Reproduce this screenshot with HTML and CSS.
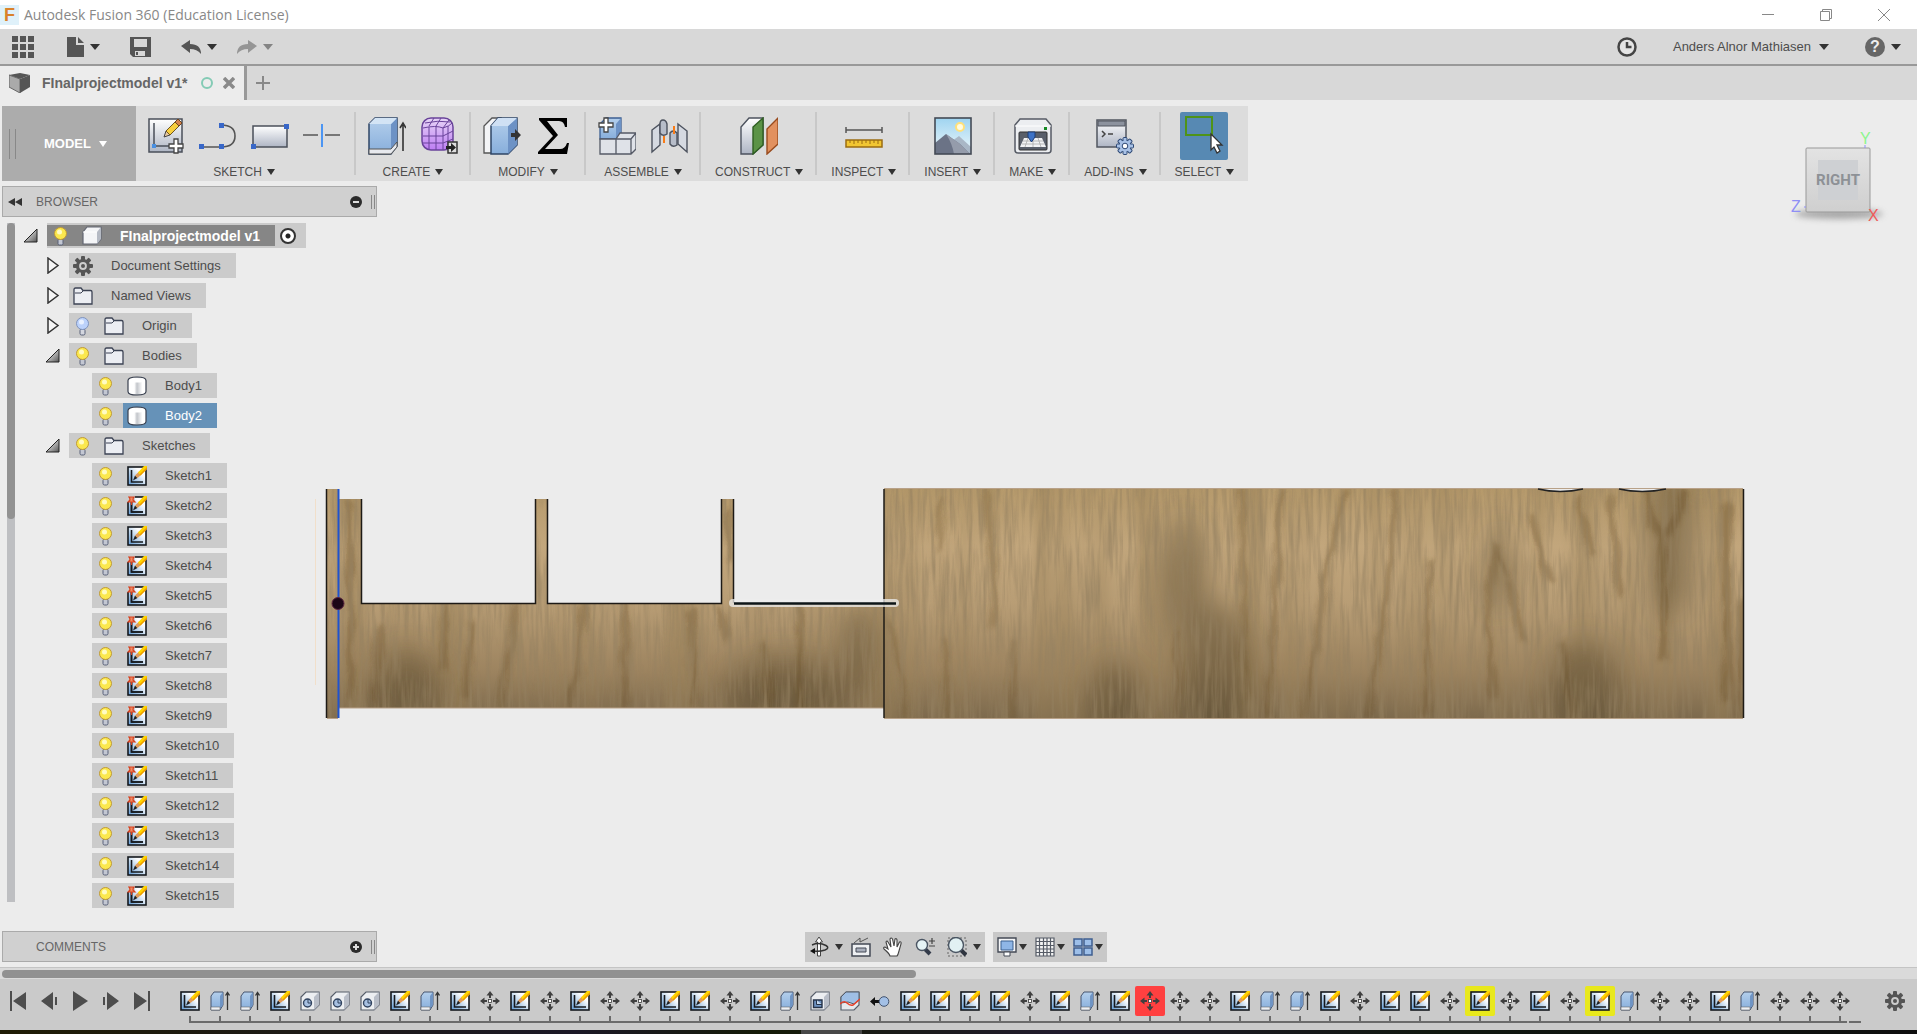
FILE: index.html
```html
<!DOCTYPE html>
<html lang="en">
<head>
    <meta charset="UTF-8">
    <meta name="viewport" content="width=device-width, initial-scale=1.0">
    <title>Autodesk Fusion 360 (Education License)</title>
    <link rel="stylesheet" href="styles.css">
</head>
<body>
    <!-- icon sprite -->
    <svg class="sprite" aria-hidden="true">
        <defs>
            <linearGradient id="g-paper" x1="0" y1="0" x2="0" y2="1"><stop offset="0" stop-color="#fff"/><stop offset="1" stop-color="#aeb5c4"/></linearGradient>
            <linearGradient id="g-sky" x1="0" y1="0" x2="0" y2="1"><stop offset="0" stop-color="#9fd4f0"/><stop offset="1" stop-color="#eef8fb"/></linearGradient>
            <linearGradient id="g-sk" x1="1" y1="0" x2="0" y2="1"><stop offset="0.3" stop-color="#fdfdfd"/><stop offset="1" stop-color="#5d9ad6"/></linearGradient>
            <linearGradient id="g-tri" x1="0" y1="0" x2="1" y2="1"><stop offset="0.2" stop-color="#eee"/><stop offset="1" stop-color="#555"/></linearGradient>
            <linearGradient id="g-cyl" x1="0" y1="0" x2="1" y2="0"><stop offset="0" stop-color="#fff"/><stop offset="0.35" stop-color="#fff"/><stop offset="0.5" stop-color="#c2c5ca"/><stop offset="0.8" stop-color="#fff"/></linearGradient>
            <linearGradient id="g-blue" x1="0" y1="0" x2="0" y2="1"><stop offset="0" stop-color="#b4cfec"/><stop offset="1" stop-color="#87aedb"/></linearGradient>
            <linearGradient id="g-purple" x1="0" y1="0" x2="0" y2="1"><stop offset="0" stop-color="#e7d5f7"/><stop offset="1" stop-color="#bd7df3"/></linearGradient>
        </defs>

        <symbol id="gear" viewBox="0 0 20 20">
            <g fill="#555"><rect x="8" width="4" height="20" rx="1"/><rect x="8" width="4" height="20" rx="1" transform="rotate(45 10 10)"/><rect x="8" width="4" height="20" rx="1" transform="rotate(90 10 10)"/><rect x="8" width="4" height="20" rx="1" transform="rotate(135 10 10)"/></g>
            <circle cx="10" cy="10" r="5.5" fill="#ccc" stroke="#555" stroke-width="3.2"/><circle cx="10" cy="10" r="2" fill="#555"/>
        </symbol>
        <symbol id="bulb" viewBox="0 0 20 20">
            <rect x="7" y="13" width="5" height="6" rx="1.5" fill="#c3c7d2" stroke="#596078"/>
            <circle cx="9.500" cy="7.500" r="6" fill="#fbe84e" stroke="#c09a36"/><circle cx="8.500" cy="6" r="2.500" fill="#fffbc4"/>
        </symbol>
        <symbol id="bulb-off" viewBox="0 0 20 20">
            <rect x="7" y="13" width="5" height="6" rx="1.5" fill="#d4d7df" stroke="#596078"/>
            <circle cx="9.500" cy="7.500" r="6" fill="#bcd2fb" stroke="#7f93bd"/><circle cx="8.500" cy="6" r="2.500" fill="#e9f1ff"/>
        </symbol>
        <symbol id="folder" viewBox="0 0 20 20">
            <path d="M1 18V3.500Q1 2 2.500 2H8L10 4.500H17.500Q19 4.500 19 6V18Z" fill="#eceef3" stroke="#3c4354" stroke-width="1.300"/><path d="M2 7H8L10 5" fill="none" stroke="#3c4354"/>
        </symbol>
        <symbol id="cube" viewBox="0 0 20 20">
            <path d="M1 18V6L5 1H19V13L15 18Z" fill="#f4f5f7" stroke="#626672" stroke-width="1.200"/><path d="M15 18V6L19 1V13Z" fill="#b5bac4"/><path d="M1 6H15" stroke="#fff"/>
        </symbol>
        <symbol id="body" viewBox="0 0 20 20">
            <path d="M1 4.500Q1 1 10 1T19 4.500V15.500Q19 19 10 19T1 15.500Z" fill="url(#g-cyl)" stroke="#39404f" stroke-width="1.200"/><path d="M2 4.500Q3 6.500 10 6.500T18 4.500Q16 2 10 2T2 4.500Z" fill="#fff"/>
        </symbol>
        <symbol id="sketch" viewBox="0 0 20 20">
            <rect x="1" y="1" width="18" height="18" fill="url(#g-sk)" stroke="#15181d" stroke-width="1.600"/>
            <path d="M4.500 4V16H16" fill="none" stroke="#15181d" stroke-width="1.600"/>
            <path d="M6 14.500L8 9.500L10.500 12Z" fill="#222"/><path d="M8 9.500L12 5.500L14.500 8.500L10.500 12Z" fill="#e09a58"/><path d="M11 6.500L17 0H20V3L13.500 9.500Z" fill="#ffd400"/><path d="M12.500 8.500L20 1V3L13.500 9.500Z" fill="#ee9a00"/>
        </symbol>
        <symbol id="sketch-pin" viewBox="0 0 20 20">
            <use href="#sketch"/><path d="M0 0H8V6H0Z" fill="#ccc"/><path d="M4.500 6V16H16" fill="none" stroke="#15181d" stroke-width="1.600"/>
            <path d="M1 1H8M2.500 1L3 4L1 6H8L6 4L6.500 1M4.500 6V9" fill="#f08a63" stroke="#d6401f" stroke-width="1.200"/>
        </symbol>
        <symbol id="extrude" viewBox="0 0 20 20">
            <path d="M1 18V5L4 1H13V14L10 19H1Z" fill="url(#g-blue)" stroke="#46556f"/><path d="M10 5L13 1V14L10 18Z" fill="#6f94c4"/><path d="M1 16H10V19H1Z" fill="#eef1f5" stroke="#666" stroke-width="0.600"/>
            <path d="M17.500 19V2M15.500 4.500L17.500 1.500L19.500 4.500" fill="none" stroke="#333" stroke-width="1.300"/>
        </symbol>
        <symbol id="hole" viewBox="0 0 20 20">
            <path d="M1 19V6L6 1H19V14L14 19Z" fill="#eceef1" stroke="#555c69" stroke-width="1.200"/><path d="M14 19V6L19 1V14Z" fill="#b9bec8"/><circle cx="7.500" cy="12" r="4" fill="#a7c0e2" stroke="#31435f" stroke-width="1.400"/><path d="M8 8V12H11" fill="none" stroke="#31435f"/>
        </symbol>
        <symbol id="shell" viewBox="0 0 20 20">
            <path d="M1 19V6L6 1H19V14L14 19Z" fill="#eceef1" stroke="#555c69" stroke-width="1.200"/><path d="M14 19V6L19 1V14Z" fill="#b9bec8"/><path d="M3.500 9H12V16.500H3.500Z" fill="#6d92c2" stroke="#25334a" stroke-width="1.400"/><path d="M6.500 9V13.500H12" fill="#c6d8ee" stroke="#25334a"/>
        </symbol>
        <symbol id="split" viewBox="0 0 20 20">
            <path d="M1 19V6L6 1H19V14L14 19Z" fill="#e5e8ed" stroke="#555c69" stroke-width="1.200"/><path d="M1 12V6L6 1H19V9L14 13L8 11Z" fill="#9fbfe5" stroke="#555c69"/><path d="M0 13Q4 9 7 12T13 14L20 8" fill="none" stroke="#e8412b" stroke-width="1.500"/>
        </symbol>
        <symbol id="point" viewBox="0 0 20 20">
            <path d="M0 10.500L5 6V9H9V12H5V15Z" fill="#111"/><circle cx="14" cy="10.500" r="4.800" fill="#a3c0e6" stroke="#42536e"/>
        </symbol>
        <symbol id="move" viewBox="0 0 20 20">
            <g fill="#3f3f3f"><path id="mv" d="M10 0L13.500 4.500H11V7H9V4.500H6.500Z"/><use href="#mv" transform="rotate(90 10 10)"/><use href="#mv" transform="rotate(180 10 10)"/><use href="#mv" transform="rotate(270 10 10)"/></g>
            <rect x="8.500" y="8.500" width="3" height="3" fill="#fff" stroke="#3f3f3f" stroke-width="0.800"/>
        </symbol>
    </svg>

    <header class="titlebar">
        <span class="logo">F</span>
        <h1>Autodesk Fusion 360 (Education License)</h1>
        <div class="window-buttons">
            <button aria-label="Minimize"><svg width="12" height="12"><path d="M0 5.500H12"/></svg></button>
            <button aria-label="Restore"><svg width="12" height="12"><path d="M.5 2.500H9.500V11.500H.5ZM2.500 2.500V.5H11.500V9.500H9.500"/></svg></button>
            <button aria-label="Close"><svg width="12" height="12"><path d="M0 0L12 12M12 0L0 12"/></svg></button>
        </div>
    </header>

    <div class="appbar">
        <button class="apps" aria-label="Data panel"><svg width="22" height="22" fill="#555"><path d="M0 0H6V6H0ZM8 0H14V6H8ZM16 0H22V6H16ZM0 8H6V14H0ZM8 8H14V14H8ZM16 8H22V14H16ZM0 16H6V22H0ZM8 16H14V22H8ZM16 16H22V22H16Z"/></svg></button>
        <button aria-label="File"><svg width="17" height="20" fill="#555"><path d="M0 0H9V8H17V20H0ZM11 0L17 6H11Z"/></svg><i class="caret"></i></button>
        <button aria-label="Save"><svg width="21" height="20"><path d="M0 0H21V20H3L0 17Z" fill="#555"/><path d="M4 2H17V10H4Z" fill="#d8d8d8"/><path d="M5 14H15V19H5Z" fill="#d8d8d8"/><path d="M6 15H8V18H6Z" fill="#555"/></svg></button>
        <div class="history">
            <button aria-label="Undo"><svg width="20" height="14"><path d="M0 6L9 0V4Q20 4 20 14Q16 9 9 9V13Z" fill="#555"/></svg><i class="caret"></i></button>
            <button class="off" aria-label="Redo"><svg width="20" height="14"><path d="M20 6L11 0V4Q0 4 0 14Q4 9 11 9V13Z" fill="#555"/></svg><i class="caret"></i></button>
        </div>
        <div class="account">
            <button aria-label="Job status"><svg width="20" height="20"><circle cx="10" cy="10" r="8.500" fill="#e4e4e4" stroke="#444" stroke-width="2.500"/><path d="M10 5V10H14.500" fill="none" stroke="#444" stroke-width="2.500"/></svg></button>
            <button class="user">Anders Alnor Mathiasen<i class="caret"></i></button>
            <button class="help" aria-label="Help"><span>?</span><i class="caret"></i></button>
        </div>
    </div>

    <nav class="tabs">
        <div class="tab">
            <svg width="22" height="20"><path d="M0 2L11 0L21 2L11 6Z" fill="#555"/><path d="M0 2L11 6V20L0 14Z" fill="#aaa" stroke="#666"/><path d="M11 6L21 2V14L11 20Z" fill="#555"/></svg>
            <a href="#">FInalprojectmodel v1*</a>
            <i class="ring"></i>
            <button aria-label="Close tab"><svg width="12" height="12"><path d="M1 1L11 11M11 1L1 11" stroke="#8a8a8a" stroke-width="3.500"/></svg></button>
        </div>
        <button class="new-tab" aria-label="New tab"><svg width="14" height="14"><path d="M7 0V14M0 7H14" stroke="#888" stroke-width="2"/></svg></button>
    </nav>

    <main class="workspace">
        <svg class="model" viewBox="0 100 1917 867" role="img" aria-label="Model, right view">
            <defs>
                <linearGradient id="wood" gradientUnits="userSpaceOnUse" x1="0" y1="489" x2="0" y2="718">
                    <stop offset="0" stop-color="#b69a6c"/><stop offset="0.25" stop-color="#c2a67c"/><stop offset="0.500" stop-color="#b89d75"/><stop offset="0.8" stop-color="#9c835f"/><stop offset="1" stop-color="#7d6a4d"/>
                </linearGradient>
                <filter id="grain" filterUnits="userSpaceOnUse" x="320" y="480" width="1430" height="245">
                    <feTurbulence type="fractalNoise" baseFrequency="0.22 0.016" numOctaves="3" seed="7"/>
                    <feColorMatrix values="0 0 0 0 0.3  0 0 0 0 0.22  0 0 0 0 0.12  2.6 0 0 0 -1.05"/>
                </filter>
                <filter id="bands" filterUnits="userSpaceOnUse" x="320" y="480" width="1430" height="245">
                    <feTurbulence type="fractalNoise" baseFrequency="0.03 0.002" numOctaves="2" seed="12"/>
                    <feColorMatrix values="0 0 0 0 0.32  0 0 0 0 0.22  0 0 0 0 0.1  2.2 0 0 0 -0.9"/>
                </filter>
                <filter id="soft" filterUnits="userSpaceOnUse" x="320" y="480" width="1430" height="245">
                    <feGaussianBlur stdDeviation="2.5" result="b"/>
                    <feTurbulence type="fractalNoise" baseFrequency="0.08 0.03" numOctaves="2" seed="3"/>
                    <feDisplacementMap in="b" scale="12" xChannelSelector="R" yChannelSelector="G"/>
                </filter>
                <filter id="softer" filterUnits="userSpaceOnUse" x="320" y="480" width="1430" height="245"><feGaussianBlur stdDeviation="14"/></filter>
                <clipPath id="shape"><path d="M327 489H338V499H361V603H536V499H548V603H722V499H733V603H884V489H1743V718H884V708H338V718H327Z"/></clipPath>
            </defs>
            <path d="M315.500 499V685" stroke="#f1dfca"/>
            <g clip-path="url(#shape)">
                <rect x="326" y="488" width="1418" height="231" fill="url(#wood)"/>
                <rect x="326" y="488" width="1418" height="231" filter="url(#bands)" opacity="0.600"/>
                <g fill="#4e3f28" opacity="0.420" filter="url(#softer)">
                    <ellipse cx="1215" cy="680" rx="36" ry="80"/><ellipse cx="1115" cy="700" rx="24" ry="40"/><ellipse cx="407" cy="690" rx="34" ry="40"/><ellipse cx="785" cy="690" rx="60" ry="35"/><ellipse cx="858" cy="650" rx="18" ry="46"/><ellipse cx="1585" cy="690" rx="36" ry="50"/><ellipse cx="1672" cy="540" rx="26" ry="80"/><ellipse cx="1185" cy="580" rx="24" ry="60"/><ellipse cx="1500" cy="570" rx="14" ry="40"/>
                </g>
                <g fill="none" stroke="#684e28" stroke-width="6" opacity="0.400" filter="url(#soft)">
                    <path d="M1345 490Q1338 525 1329 553L1318 630L1301 718M1395 489Q1394 540 1388 587L1368 718M1281 489L1276 587L1267 718M1430 560L1426 718"/>
                    <path d="M1497 543L1489 590V640L1494 700M1506 577L1525 643M1497 545L1508 575M1531 513L1542 560L1553 580M1579 498L1592 557M1610 495L1618 597M1562 640L1574 718"/>
                    <path d="M1646 489Q1649 525 1663 537Q1678 522 1686 489M1663 537V660M1727 503V703M1742 600V718" stroke-width="9"/>
                    <path d="M985 489L995 570L992 630M943 500L938 550M1177 630V718M890 620L908 718M944 640L948 718M1240 489L1246 700M1016 640L1010 718" stroke-width="4"/>
                    <path d="M517 603L513 637L500 708M584 603L579 670L567 708M444 603V670M380 625L375 708M472 620L466 697M626 603L624 708M690 608L695 708M719 607L727 640M763 643L771 705M800 605V708M349 500L351 700M729 510V560"/>
                </g>
                <rect x="326" y="488" width="1418" height="231" filter="url(#grain)" opacity="0.650"/>
            </g>
            <path d="M339 708H884M884 718.500H1743M327 718.500H338M884 488.500H1743" stroke="#b8a188" fill="none"/>
            <path d="M326.500 489V718M361.500 499V603.500H535.500V499M547.500 499V603.500H721.500V499M733.500 499V603M884 489V718M1743.500 489V718" stroke="#1d1a16" stroke-width="1.500" fill="none"/>
            <path d="M1538 489Q1560 494 1583 489M1619 489Q1642 494 1666 489" fill="#ececec" stroke="#222" stroke-width="1.500"/>
            <path d="M338.500 489V718" stroke="#1f52cf" stroke-width="2"/>
            <rect x="729" y="599" width="170" height="8" rx="4" fill="#eee" fill-opacity="0.750"/>
            <path d="M734 603.500H896" stroke="#0d1517" stroke-width="2.500"/>
            <circle cx="338" cy="603.500" r="6" fill="#1c0616" stroke="#5c2540"/>
        </svg>

        <section class="ribbon" aria-label="Tools">
            <button class="mode"><i class="grip"></i><span>MODEL<i class="caret"></i></span></button>
            <div class="group wide">
                <div class="tools">
                    <button aria-label="Create sketch"><svg viewBox="0 0 38 38"><rect x="2" y="2" width="33" height="33" fill="url(#g-paper)" stroke="#4a4f59" stroke-width="1.500"/><path d="M7 6V29H24" fill="none" stroke="#4a4f59" stroke-width="1.500"/><rect x="5" y="27" width="4" height="4" fill="#4a90e2"/><path d="M17 20L19 14L23 18Z" fill="#e8c9a0" stroke="#444"/><path d="M19 14L30 3L34 7L23 18Z" fill="#f8cf3e" stroke="#6d5420"/><path d="M28 5L31 2L35 6L32 9Z" fill="#d6834e" stroke="#6d4420"/><path d="M27 22H31V27H36V31H31V36H27V31H22V27H27Z" fill="#fff" stroke="#444" stroke-width="1.300"/></svg></button>
                    <button aria-label="Line"><svg viewBox="0 0 38 38"><path d="M2 30H22Q36 30 36 19T22 8" fill="none" stroke="#555" stroke-width="1.600"/><path d="M0 27H5V32H0ZM20 27H25V32H20ZM20 6H25V11H20Z" fill="#3867c8"/></svg></button>
                    <button aria-label="Rectangle"><svg viewBox="0 0 38 38"><rect x="2" y="9" width="34" height="21" fill="url(#g-paper)" stroke="#4a4f59" stroke-width="1.500"/><path d="M0 27H5V32H0ZM33 7H38V12H33Z" fill="#3867c8"/></svg></button>
                    <button aria-label="Trim"><svg viewBox="0 0 38 38"><path d="M0 18H15M22 18H37" stroke="#555" stroke-width="1.600"/><path d="M19 7V30" stroke="#3b8df5" stroke-width="1.800"/></svg></button>
                </div>
                <button class="label">SKETCH<i class="caret"></i></button>
            </div>
            <div class="group pair">
                <div class="tools">
                    <button aria-label="Extrude"><svg viewBox="0 0 38 38"><path d="M1 37V7L7 1H29V29L23 37Z" fill="url(#g-blue)" stroke="#2f4566" stroke-width="1.500"/><path d="M23 7L29 1V29L23 37Z" fill="#6d92c5"/><path d="M1 7L7 1H29L23 7Z" fill="#d3e4f5"/><path d="M1 32H23L29 25V30L23 37H1Z" fill="#e7e9ee" stroke="#555"/><path d="M35 34V8M32 11L35 6L38 11" fill="none" stroke="#333" stroke-width="1.600"/></svg></button>
                    <button aria-label="Create form"><svg viewBox="0 0 38 38"><rect x="2" y="1" width="31" height="32" rx="9" fill="url(#g-purple)" stroke="#69439a" stroke-width="1.500"/><path d="M3 11Q16 8 23 11Q30 9 32 6M3 19H23L33 14M3 26H23L33 22M9 10V32M16 9V33M23 11V33M9 9L14 1M16 9L21 1M23 11L29 3M28 9V31M5 6Q18 3 30 5" fill="none" stroke="#69439a"/><path d="M28 25H37V36H28Z" fill="#ddd" stroke="#333" stroke-width="1.500"/><path d="M26 29H31V26L36 30.500L31 35V32H26Z" fill="#222"/></svg></button>
                </div>
                <button class="label">CREATE<i class="caret"></i></button>
            </div>
            <div class="group pair">
                <div class="tools">
                    <button aria-label="Press pull"><svg viewBox="0 0 38 38"><path d="M1 36V9L9 1H18L9 36Z" fill="#f3f4f6" stroke="#555" stroke-width="1.300"/><path d="M8 37V9L15 1H34V28L25 37Z" fill="url(#g-blue)" stroke="#2f4566" stroke-width="1.500"/><path d="M25 9L34 1V28L25 37Z" fill="#6d92c5"/><path d="M8 9L15 1H34L25 9Z" fill="#cfe0f4"/><path d="M28 16H32V12L38 18L32 24V20H28Z" fill="#333"/></svg></button>
                    <button aria-label="Change parameters"><svg viewBox="0 0 38 38"><path d="M4 1H32V10H30Q29 4 24 4H12L23 18L10 32H25Q30 32 32 26H34L32 37H3V35L18 19L4 3Z" fill="#000"/></svg></button>
                </div>
                <button class="label">MODIFY<i class="caret"></i></button>
            </div>
            <div class="group pair">
                <div class="tools">
                    <button aria-label="New component"><svg viewBox="0 0 38 38"><path d="M2 22V7L8 1H23V17L18 22Z" fill="url(#g-blue)" stroke="#3c5f92" stroke-width="1.300"/><path d="M18 22V7L23 1V17Z" fill="#6d92c5"/><path d="M2 22H18V37H2ZM18 22L22 16H38V32L33 37H18ZM18 22H33V37M33 22L38 16" fill="#dfe2e8" stroke="#555a66" stroke-width="1.300"/><path d="M6 1H10V6H15V10H10V15H6V10H1V6H6Z" fill="#fff" stroke="#444" stroke-width="1.300"/></svg></button>
                    <button aria-label="Joint"><svg viewBox="0 0 38 38"><path d="M2 13L10 7V28L2 35Z" fill="#d5d9e1" stroke="#4c525e" stroke-width="1.400"/><path d="M10 7Q10 3 13 3T17 7V17Q13 20 10 16Z" fill="#b7bdc9" stroke="#4c525e" stroke-width="1.400"/><path d="M28 7L37 14V35L28 27Z" fill="#d5d9e1" stroke="#4c525e" stroke-width="1.400"/><path d="M20 16Q23 12 27 16V28Q23 31 20 27Z" fill="#b7bdc9" stroke="#4c525e" stroke-width="1.400"/><path d="M14 19V26M24 9V17" stroke="#f97b16" stroke-width="2"/></svg></button>
                </div>
                <button class="label">ASSEMBLE<i class="caret"></i></button>
            </div>
            <div class="group">
                <div class="tools">
                    <button aria-label="Offset plane"><svg viewBox="0 0 38 38"><path d="M1 37V10L9 1H23V28L13 37Z" fill="url(#g-paper)" stroke="#4c525e" stroke-width="1.400"/><path d="M13 37V10L23 1V28Z" fill="#5b9347" stroke="#2f5f22" stroke-width="1.400"/><path d="M27 37V12L38 1V27Z" fill="#e2915f" stroke="#994b1e" stroke-width="1.400"/></svg></button>
                </div>
                <button class="label">CONSTRUCT<i class="caret"></i></button>
            </div>
            <div class="group">
                <div class="tools">
                    <button aria-label="Measure"><svg viewBox="0 0 38 38"><path d="M1 10V16M37 10V16M1 13H37" stroke="#555" stroke-width="1.500"/><path d="M1 23H37V30H1Z" fill="#f2c632" stroke="#9a6c12" stroke-width="1.500"/><path d="M5 23V26M9 23V27M13 23V26M17 23V27M21 23V26M25 23V27M29 23V26M33 23V27" stroke="#9a6c12"/></svg></button>
                </div>
                <button class="label">INSPECT<i class="caret"></i></button>
            </div>
            <div class="group">
                <div class="tools">
                    <button aria-label="Insert canvas"><svg viewBox="0 0 38 38"><rect x="1" y="1" width="36" height="36" fill="url(#g-sky)"/><circle cx="26" cy="10" r="4" fill="#fffbe0" stroke="#ffe07a" stroke-width="2"/><path d="M18 24L25 19L37 30V37H18Z" fill="#a9b7c6"/><path d="M1 26L12 17L26 27L36 37H1Z" fill="#6b7386"/><path d="M12 17L26 27L36 37H20Q18 26 12 17Z" fill="#959cab"/><rect x="1" y="1" width="36" height="36" fill="none" stroke="#444a55" stroke-width="1.600"/></svg></button>
                </div>
                <button class="label">INSERT<i class="caret"></i></button>
            </div>
            <div class="group">
                <div class="tools">
                    <button aria-label="3D print"><svg viewBox="0 0 38 38"><path d="M1 8L6 2H32L37 8V33Q37 36 34 36H4Q1 36 1 33Z" fill="#eceef1" stroke="#555a64" stroke-width="1.500"/><path d="M1 9H37" stroke="#fff"/><rect x="5" y="15" width="28" height="18" rx="1" fill="#595f6a" stroke="#333"/><path d="M10 21H28L32 30H6Z" fill="#f1f2f4"/><path d="M9 24H29M8 27H31M14 21L11 30M19 21V30M24 21L27 30" stroke="#aaa" stroke-width="0.800"/><path d="M14 15H21V20L17.500 25L14 20Z" fill="#3d72c6" stroke="#1f3f77"/><rect x="30" y="10" width="3" height="3" fill="#168a23"/></svg></button>
                </div>
                <button class="label">MAKE<i class="caret"></i></button>
            </div>
            <div class="group">
                <div class="tools">
                    <button aria-label="Scripts and add-ins"><svg viewBox="0 0 38 38"><rect x="1" y="3" width="29" height="27" fill="url(#g-paper)" stroke="#50555f" stroke-width="1.500"/><path d="M2 4H29V9H2Z" fill="#8c929e" stroke="#50555f"/><path d="M6 14L9 17L6 20M12 17H17" fill="none" stroke="#444" stroke-width="1.500"/><g transform="translate(29 29)"><g fill="#a8c1e6" stroke="#2d4875"><rect x="-2" y="-8.500" width="4" height="17" rx="1"/><rect x="-2" y="-8.500" width="4" height="17" rx="1" transform="rotate(45)"/><rect x="-2" y="-8.500" width="4" height="17" rx="1" transform="rotate(90)"/><rect x="-2" y="-8.500" width="4" height="17" rx="1" transform="rotate(135)"/></g><circle r="5.500" fill="#a8c1e6"/><circle r="2.800" fill="#fff" stroke="#2d4875"/></g></svg></button>
                </div>
                <button class="label">ADD-INS<i class="caret"></i></button>
            </div>
            <div class="group last">
                <div class="tools">
                    <button class="active" aria-label="Select"><svg viewBox="0 0 48 48"><rect x="6" y="5" width="26" height="18" fill="none" stroke="#4f9318" stroke-width="2"/><path d="M31 22L42 33H37L40 39L37 41L34 35L31 38Z" fill="#fff" stroke="#333" stroke-width="1.300"/></svg></button>
                </div>
                <button class="label">SELECT<i class="caret"></i></button>
            </div>
        </section>

        <svg class="viewcube" viewBox="0 0 104 100" role="img" aria-label="View cube: right">
            <defs>
                <linearGradient id="cube-face" x1="0" y1="0" x2="0" y2="1"><stop offset="0" stop-color="#e3e3e3"/><stop offset="1" stop-color="#cfcfcf"/></linearGradient>
                <filter id="cube-shadow" x="-20%" y="-100%" width="140%" height="300%"><feGaussianBlur stdDeviation="3"/></filter>
            </defs>
            <ellipse cx="52" cy="86" rx="44" ry="5" fill="#888" opacity="0.700" filter="url(#cube-shadow)"/>
            <rect x="19" y="20" width="64" height="64" rx="1" fill="url(#cube-face)" stroke="#999"/>
            <rect x="31" y="32" width="40" height="40" fill="#ced0d3"/>
            <text x="51" y="57" text-anchor="middle" class="face">RIGHT</text>
            <text x="73" y="16" fill="#8df58d">Y</text>
            <text x="4" y="84" fill="#8f8ff5">Z</text>
            <text x="81" y="93" fill="#f05a5a">X</text>
            <path d="M17 79H19M78 17V20" stroke="#8f8ff5"/>
        </svg>

        <aside class="side">
            <div class="panel-head"><button aria-label="Collapse"><svg width="14" height="8"><path d="M7 0V8L0 4ZM14 0V8L7 4Z" fill="#333"/></svg></button><h2>BROWSER</h2><button class="round" aria-label="Hide browser"><svg width="12" height="12"><circle cx="6" cy="6" r="6" fill="#2b2b2b"/><path d="M3 6H9" stroke="#ddd" stroke-width="2"/></svg></button><i class="grip"></i></div>
            <div class="tree-wrap">
                <div class="tree-scroll"><i></i></div>
                <ul class="tree" id="tree"></ul>
            </div>
        </aside>

        <div class="bottom">
            <div class="panel-head"><h2>COMMENTS</h2><button class="round" aria-label="Show comments"><svg width="12" height="12"><circle cx="6" cy="6" r="6" fill="#2b2b2b"/><path d="M3 6H9M6 3V9" stroke="#ddd" stroke-width="2"/></svg></button><i class="grip"></i></div>
            <div class="navbar">
                <div class="nav-group">
                    <button class="drop" aria-label="Orbit"><svg viewBox="0 0 20 20"><path d="M8.500 19V5H6.500L10 0L13.500 5H11.500V19Z" fill="#fff" stroke="#444"/><path d="M3 8Q10 5 17 8.500Q21 11 16 13Q10 15 5 14" fill="none" stroke="#333" stroke-width="1.500"/><path d="M1 14L6 11V17Z" fill="#111"/></svg><i class="caret"></i></button>
                    <button aria-label="Look at"><svg viewBox="0 0 20 20"><path d="M1 7H19V19H1Z" fill="#eef0f3" stroke="#444a56" stroke-width="1.500"/><path d="M5 11H15V15H5Z" fill="#aab0bd" stroke="#444a56"/><path d="M3 6L9 1V5L17 1" fill="none" stroke="#555"/></svg></button>
                    <button aria-label="Pan"><svg viewBox="0 0 20 20"><path d="M7 19Q6 16 1 12Q0 10 2 10L5 12L3 5Q4 3 5 5L8 10L7 2Q8 0 9.500 2L11 9L12 2Q13.500 1 14 3V10L16.500 5Q18.500 4 18 7L16 14Q15 18 14 19Z" fill="#fff" stroke="#444" stroke-width="1.100"/></svg></button>
                    <button aria-label="Zoom"><svg viewBox="0 0 20 20"><path d="M10 12L15 17" stroke="#333b4a" stroke-width="4"/><circle cx="7" cy="8" r="5.500" fill="#e6f4f6" stroke="#4a5563" stroke-width="1.400"/><path d="M17 1V7M14 4H20M14 9H20" stroke="#444" stroke-width="1.200"/></svg></button>
                    <button class="drop" aria-label="Fit"><svg viewBox="0 0 20 20"><rect x="1" y="1" width="18" height="18" fill="none" stroke="#666" stroke-dasharray="2 2"/><path d="M14 13L19 18" stroke="#2f3540" stroke-width="4"/><circle cx="9" cy="8" r="7.500" fill="#e2f1f3" stroke="#4a5563" stroke-width="1.400"/></svg><i class="caret"></i></button>
                </div>
                <div class="nav-group tight">
                    <button class="drop" aria-label="Display settings"><svg viewBox="0 0 20 20"><path d="M1 1H19V15H1Z" fill="#f4f5f7" stroke="#444a56" stroke-width="1.400"/><path d="M4 4H16V13H4Z" fill="#8fb6e6" stroke="#3d608f"/><path d="M7 15H13V19H7Z" fill="#fff" stroke="#444a56"/></svg><i class="caret"></i></button>
                    <button class="drop" aria-label="Grid and snaps"><svg viewBox="0 0 20 20"><path d="M1 1H19V19H1Z" fill="#f4f4f4"/><path d="M1 1H19V19H1ZM4.500 1V19M8.500 1V19M12 1V19M15.500 1V19M1 4.500H19M1 8.500H19M1 12H19M1 15.500H19" fill="none" stroke="#555b66" stroke-width="1.200"/></svg><i class="caret"></i></button>
                    <button class="drop" aria-label="Viewports"><svg viewBox="0 0 20 20"><path d="M1 2H9V9H1ZM11 2H19V9H11ZM1 11H9V18H1ZM11 11H19V18H11Z" fill="#9dbfe9" stroke="#3f5f90" stroke-width="1.500"/></svg><i class="caret"></i></button>
                </div>
            </div>
        </div>
    </main>

    <footer class="timeline">
        <div class="timeline-scroll"><i></i></div>
        <div class="timeline-row">
            <div class="playback">
                <button aria-label="Start"><svg width="16" height="20"><path d="M0 0H2V20H0ZM16 1V19L3 10Z"/></svg></button>
                <button aria-label="Step back"><svg width="16" height="20"><path d="M12 1V19L0 10ZM14 6H16V14H14Z"/></svg></button>
                <button aria-label="Play"><svg width="16" height="20"><path d="M1 0L16 10L1 20Z"/></svg></button>
                <button aria-label="Step forward"><svg width="16" height="20"><path d="M4 1V19L16 10ZM0 6H2V14H0Z"/></svg></button>
                <button aria-label="End"><svg width="16" height="20"><path d="M14 0H16V20H14ZM0 1V19L13 10Z"/></svg></button>
            </div>
            <ol class="steps" id="steps"></ol>
            <button class="settings" aria-label="Timeline settings"><svg width="20" height="20"><use href="#gear"/></svg></button>
        </div>
    </footer>
    <div class="taskbar"><i></i></div>

    <script>
        // level, toggle, bulb, icon, name
        var rows = [
            [0, 'open', 'bulb', 'cube', 'FInalprojectmodel v1'],
            [1, 'closed', '', 'gear', 'Document Settings'],
            [1, 'closed', '', 'folder', 'Named Views'],
            [1, 'closed', 'bulb-off', 'folder', 'Origin'],
            [1, 'open', 'bulb', 'folder', 'Bodies'],
            [2, '', 'bulb', 'body', 'Body1'],
            [2, '', 'bulb', 'body', 'Body2'],
            [1, 'open', 'bulb', 'folder', 'Sketches']
        ];
        var plain = [1, 3, 14];
        for (var n = 1; n <= 15; n++) {
            rows.push([2, '', 'bulb', plain.indexOf(n) >= 0 ? 'sketch' : 'sketch-pin', 'Sketch' + n]);
        }

        function icon(id) {
            return '<svg width="20" height="20"><use href="#' + id + '"/></svg>';
        }

        var arrows = {
            open: '<svg width="15" height="15"><path d="M1 14L14 1V14Z" fill="url(#g-tri)" stroke="#222"/></svg>',
            closed: '<svg width="15" height="17"><path d="M3 1L13 8.500L3 16Z" fill="#f4f4f4" stroke="#333" stroke-width="1.500"/></svg>'
        };

        document.getElementById('tree').innerHTML = rows.map(function(r) {
            var html = '<li class="level' + r[0] + (r[4] === 'Body2' ? ' selected' : '') + '">';
            html += r[1] ? '<button class="toggle" aria-label="Toggle ' + r[4] + '">' + arrows[r[1]] + '</button>' : '<i class="toggle"></i>';
            html += '<div class="pill">';
            if (r[2]) {
                html += '<button class="eye" aria-label="Show or hide ' + r[4] + '">' + icon(r[2]) + '</button>';
            }
            html += '<a href="#" class="item">' + icon(r[3]) + r[4] + '</a>';
            if (r[0] === 0) {
                html += '<input type="radio" checked aria-label="Activate component">';
            }
            return html + '</div></li>';
        }).join('');

        // s sketch, e extrude, h hole, m move, l shell, p split, o point; R and Y are the flagged ones
        var kinds = { s: 'sketch', e: 'extrude', h: 'hole', m: 'move', l: 'shell', p: 'split', o: 'point', R: 'move', Y: 'sketch' };
        document.getElementById('steps').innerHTML = 'seeshhhsesmsmsmmssmselpossssmsesRmmseesmssmYmsmYemmsemmm'.split('').map(function(k) {
            var flag = k === 'R' ? ' class="error"' : k === 'Y' ? ' class="warning"' : '';
            return '<li' + flag + '><button aria-label="' + kinds[k] + '">' + icon(kinds[k]) + '</button></li>';
        }).join('');
    </script>
</body>
</html>
```
FILE: styles.css
```css
* {
    box-sizing: border-box;
}
body {
    margin: 0;
    height: 100vh;
    display: flex;
    flex-direction: column;
    overflow: hidden;
    font-family: "Liberation Sans", Arial, sans-serif;
    font-size: 13px;
    color: #4d4d4d;
    background-color: #ececec;
}
button {
    display: flex;
    align-items: center;
    margin: 0;
    padding: 0;
    border: none;
    background: none;
    font: inherit;
    color: inherit;
    cursor: pointer;
}
a {
    color: inherit;
    text-decoration: none;
}
svg {
    display: block;
    flex-shrink: 0;
}
.sprite {
    position: absolute;
    width: 0;
    height: 0;
}
.caret {
    width: 0;
    height: 0;
    margin-left: 8px;
    border: 4px solid transparent;
    border-top: 6px solid #333;
    border-bottom: none;
}
.grip {
    width: 4px;
    height: 14px;
    border-left: 1px solid #888;
    border-right: 1px solid #888;
}

/* title bar */
.titlebar {
    display: flex;
    align-items: center;
    height: 29px;
    flex-shrink: 0;
    padding-right: 4px;
    background-color: #fff;
}
.logo {
    width: 19px;
    height: 20px;
    background-color: #dff1fa;
    color: #d9822b;
    font-size: 18px;
    font-weight: bold;
    line-height: 20px;
    text-align: center;
}
.titlebar h1 {
    flex: 1;
    margin: 0 0 0 5px;
    font-family: "Open Sans", "Noto Sans", sans-serif;
    font-size: 14px;
    font-weight: normal;
    color: #888;
}
.window-buttons {
    display: flex;
}
.window-buttons button {
    width: 58px;
    justify-content: center;
}
.window-buttons path {
    fill: none;
    stroke: #888;
}

/* app bar */
.appbar {
    display: flex;
    align-items: center;
    gap: 30px;
    height: 37px;
    flex-shrink: 0;
    padding: 0 16px 0 12px;
    background-color: #d8d8d8;
    border-bottom: 2px solid #999;
}
.appbar .caret {
    margin-left: 6px;
    border-width: 6px 5px 0;
}
.apps {
    margin-right: 3px;
}
.history {
    display: flex;
    gap: 20px;
}
.off {
    opacity: 0.5;
}
.account {
    display: flex;
    align-items: center;
    gap: 36px;
    margin-left: auto;
}
.account .user .caret {
    margin-left: 8px;
}
.help span {
    width: 20px;
    border-radius: 50%;
    background-color: #666;
    color: #eee;
    font-size: 16px;
    font-weight: bold;
    line-height: 20px;
}

/* document tabs */
.tabs {
    display: flex;
    height: 34px;
    flex-shrink: 0;
    background-color: #d8d8d8;
}
.tab {
    display: flex;
    align-items: center;
    width: 247px;
    padding-left: 9px;
    background-color: #ececec;
    border-right: 3px solid #999;
    font-size: 14px;
    font-weight: bold;
    color: #666;
}
.tab a {
    margin-left: 11px;
}
.ring {
    width: 12px;
    height: 12px;
    margin: 0 10px 0 auto;
    border: 2px solid #84cbb5;
    border-radius: 50%;
}
.tab button {
    margin-right: 9px;
}
.new-tab {
    margin-left: 9px;
}

/* workspace */
.workspace {
    position: relative;
    display: flex;
    flex-direction: column;
    flex: 1;
    min-height: 0;
    padding: 6px 2px 5px;
}
.model {
    position: absolute;
    top: 0;
    left: 0;
    width: 100%;
    height: 100%;
}
.ribbon,
.side,
.bottom {
    position: relative;
}
.ribbon {
    display: flex;
    align-self: flex-start;
    height: 75px;
    flex-shrink: 0;
    background-color: #dcdcdc;
}
.mode {
    width: 134px;
    padding-left: 7px;
    background-color: #acacac;
    color: #fff;
    font-weight: bold;
}
.mode .grip {
    width: 7px;
    height: 30px;
    margin-right: 28px;
}
.mode span {
    display: flex;
    align-items: center;
}
.mode .caret {
    border-top-color: #fff;
}
.group {
    position: relative;
    display: flex;
    flex-direction: column;
    align-items: center;
    padding: 6px 14px 0;
}
.group::after {
    content: "";
    position: absolute;
    top: 6px;
    right: 0;
    width: 2px;
    height: 63px;
    background-color: #c8c8c8;
}
.last::after {
    display: none;
}
.tools {
    display: flex;
    align-items: center;
    gap: 14px;
    height: 48px;
}
.pair {
    padding: 6px 13px 0 12px;
}
.wide {
    padding: 6px 15px 0 11px;
}
.tools svg {
    width: 38px;
    height: 38px;
}
.tools .active {
    background-color: #5789b3;
    border-radius: 2px;
}
.tools .active svg {
    width: 48px;
    height: 48px;
}
.label {
    margin-top: 4px;
    font-size: 12px;
    line-height: 16px;
}
.label .caret {
    margin-left: 5px;
}
.viewcube {
    position: absolute;
    top: 28px;
    right: 26px;
    width: 104px;
    height: 100px;
    font-size: 16px;
}
.viewcube .face {
    font-family: Roboto, sans-serif;
    font-size: 15px;
    font-weight: bold;
    fill: #8d9196;
}

/* browser */
.side {
    flex: 1;
    min-height: 0;
    display: flex;
    flex-direction: column;
    width: 375px;
    margin-top: 5px;
}
.panel-head {
    display: flex;
    align-items: center;
    width: 375px;
    height: 31px;
    flex-shrink: 0;
    padding: 0 1px 0 5px;
    background-color: #d0d0d0;
    border: 1px solid #aaa;
    color: #666;
}
.panel-head h2 {
    margin: 0;
    font-size: 12px;
    font-weight: normal;
}
.panel-head button + h2 {
    margin-left: 14px;
}
.panel-head h2:first-child {
    margin-left: 28px;
}
.round {
    margin: 0 9px 0 auto;
}
.tree-wrap {
    display: flex;
    flex: 1;
    min-height: 0;
    padding: 6px 0 0 5px;
}
.tree-scroll {
    width: 8px;
    margin-bottom: 29px;
    background-color: #bebfc2;
}
.tree-scroll i {
    display: block;
    height: 296px;
    border-radius: 4px;
    background-color: #929292;
}
.tree {
    margin: 0;
    padding: 0;
    list-style: none;
}
.tree li {
    display: flex;
    align-items: center;
    gap: 9px;
    height: 25px;
    margin-bottom: 5px;
}
.level0 {
    padding-left: 8px;
}
.level1 {
    padding-left: 30px;
}
.level2 {
    padding-left: 53px;
}
.toggle {
    width: 15px;
}
.pill {
    display: flex;
    align-items: stretch;
    height: 25px;
    background-color: #cbcbcb;
}
.eye {
    width: 31px;
    padding-left: 4px;
}
.item {
    display: flex;
    align-items: center;
    gap: 18px;
    padding: 0 15px 0 4px;
}
.level0 .pill {
    padding: 2px 10px 2px 0;
}
.level0 .eye,
.level0 .item {
    background-color: #868686;
    color: #fff;
    font-size: 14px;
    font-weight: bold;
}
.level0 input {
    appearance: none;
    width: 16px;
    height: 16px;
    margin: 3px 0 0 5px;
    border: 2px solid #333;
    border-radius: 50%;
    background: radial-gradient(circle, #222 2px, #fff 3px);
}
.selected .item {
    background-color: #6692b8;
    color: #fff;
}

/* comments and navigation bar */
.bottom {
    display: grid;
    grid-template-columns: 1fr auto 1fr;
    align-items: center;
    padding-right: 5px;
}
.navbar {
    display: flex;
    gap: 8px;
}
.nav-group {
    display: flex;
    align-items: center;
    gap: 8px;
    height: 30px;
    padding: 0 4px;
    background-color: #c8c8c8;
}
.nav-group button {
    padding-right: 4px;
}
.nav-group .drop {
    padding-right: 0;
}
.nav-group svg {
    width: 20px;
    height: 20px;
}
.nav-group .caret {
    margin-left: 6px;
}
.tight .caret {
    margin-left: 2px;
}

/* timeline */
.timeline {
    flex-shrink: 0;
    background-color: #cacaca;
}
.timeline-scroll {
    height: 12px;
    padding: 2px;
    background-color: #dadada;
    border-top: 1px solid #c4c4c4;
}
.timeline-scroll i {
    display: block;
    width: calc(48% - 4px);
    height: 8px;
    border-radius: 4px;
    background-color: #919191;
}
.timeline-row {
    display: flex;
    height: 51px;
    padding: 7px 12px 0 10px;
}
.playback {
    display: flex;
    gap: 15px;
    height: 30px;
    margin-right: 25px;
    fill: #4d4d4d;
}
.steps {
    position: relative;
    display: flex;
    height: 37px;
    margin: 0;
    padding: 0;
    list-style: none;
    background: linear-gradient(#6b6b6b, #6b6b6b) 14px 100% / calc(100% - 22px) 2px no-repeat;
}
.steps::after {
    content: "";
    position: absolute;
    left: calc(100% - 6px);
    bottom: 0;
    width: 12px;
    border-bottom: 2px dashed #6b6b6b;
}
.steps li {
    position: relative;
    width: 30px;
}
.steps li::after {
    content: "";
    position: absolute;
    left: 14px;
    bottom: 0;
    width: 2px;
    height: 7px;
    background-color: #6b6b6b;
}
.steps button {
    justify-content: center;
    width: 30px;
    height: 30px;
    border-radius: 2px;
}
.error button {
    background-color: #ff4040;
}
.warning button {
    background-color: #e8e81c;
}
.settings {
    height: 30px;
    margin-left: auto;
}
.taskbar {
    height: 4px;
    flex-shrink: 0;
    background: linear-gradient(90deg, #1f1c04, #1b1826 30%, #141a06 40%, #201a2c 55%, #10170f 75%, #0e0e0e);
}
.taskbar i {
    display: block;
    width: 61px;
    height: 4px;
    margin-left: 801px;
    background-color: #484848;
}
```
